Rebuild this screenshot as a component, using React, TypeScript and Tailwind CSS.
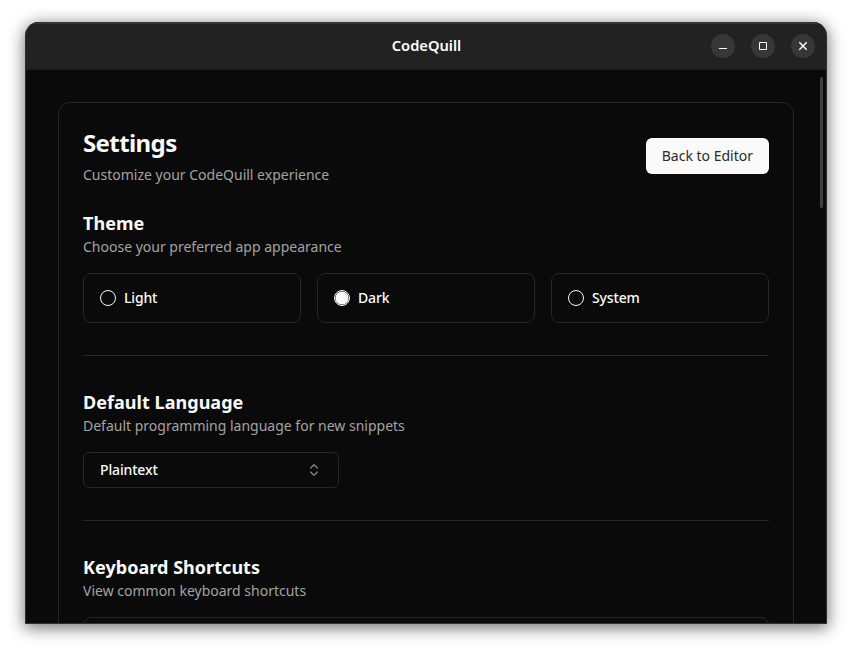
import { ReactNode } from "react";

function WindowButton({ label, children }: { label: string; children: ReactNode }) {
  return (
    <button aria-label={label} className="flex size-6 items-center justify-center rounded-full bg-[#373737]">
      <svg width="24" height="24" viewBox="0 0 24 24" fill="none" stroke="#fff">
        {children}
      </svg>
    </button>
  );
}

function TitleBar() {
  return (
    <header className="grid h-12 shrink-0 grid-cols-[1fr_auto_1fr] items-center border-t-2 border-b border-t-[#343434] border-b-[#1b1b1b] bg-[#222222] pr-[11px] pb-px">
      <span />
      <span className="pb-0.5 pl-3 text-[14.67px] font-semibold leading-5 text-white">CodeQuill</span>
      <div className="flex justify-end gap-4">
        <WindowButton label="Minimize">
          <path d="M8 14.5h8" />
        </WindowButton>
        <WindowButton label="Maximize">
          <path d="M8.5 8.5h7v7h-7z" />
        </WindowButton>
        <WindowButton label="Close">
          <path d="M8.3 8.3l7.4 7.4M15.7 8.3l-7.4 7.4" strokeWidth="1.4" />
        </WindowButton>
      </div>
    </header>
  );
}

function Section({ title, description, children }: { title: string; description: string; children: ReactNode }) {
  return (
    <section>
      <h3 className="text-lg font-bold leading-7 tracking-[0.04px]">{title}</h3>
      <p className="mb-4 text-sm leading-5 text-[#a3a3a3]">{description}</p>
      {children}
    </section>
  );
}

function ThemeOption({ label, checked = false }: { label: string; checked?: boolean }) {
  return (
    <label className="flex h-[50px] items-center gap-2 rounded-lg border border-[#262626] px-4">
      <svg width="16" height="16" viewBox="0 0 16 16" fill="none">
        <circle cx="8" cy="8" r="7.5" stroke="#fafafa" />
        {checked && <circle cx="8" cy="8" r="6.6" fill="#fafafa" />}
      </svg>
      <span className="text-sm font-medium leading-5 tracking-[-0.15px]">{label}</span>
    </label>
  );
}

function Separator() {
  return <div className="my-8 h-px bg-[#262626]" />;
}

export default function App() {
  return (
    <div className="h-[652px] w-[852px] overflow-hidden bg-white pl-[25px] pt-[22px] font-['Noto_Sans',sans-serif]">
      <div className="flex h-[602px] w-[802px] flex-col overflow-hidden rounded-t-[14px] border border-t-0 border-[#303030] bg-[#0a0a0a] text-[#fafafa] shadow-[0_3px_16px_1px_rgba(0,0,0,0.55)]">
        <TitleBar />
        <div className="flex min-h-0 flex-1 overflow-hidden">
          <main className="w-[768px] shrink-0 pl-8 pt-8">
            <div className="h-[700px] rounded-xl border border-[#262626] p-6">
              <div className="mb-6 flex items-center justify-between">
                <div>
                  <h1 className="text-2xl font-bold leading-8 tracking-tight">Settings</h1>
                  <p className="mt-1.5 text-sm leading-5 text-[#a3a3a3]">Customize your CodeQuill experience</p>
                </div>
                <button className="h-9 rounded-md bg-[#fafafa] px-4 text-sm text-[#2b2b2b]">Back to Editor</button>
              </div>
              <Section title="Theme" description="Choose your preferred app appearance">
                <div className="grid grid-cols-3 gap-4">
                  <ThemeOption label="Light" />
                  <ThemeOption label="Dark" checked />
                  <ThemeOption label="System" />
                </div>
              </Section>
              <Separator />
              <Section title="Default Language" description="Default programming language for new snippets">
                <button className="flex h-9 w-64 items-center justify-between rounded-md border border-[#262626] px-4 text-sm font-medium tracking-[-0.15px]">
                  Plaintext
                  <svg width="16" height="16" viewBox="0 0 24 24" fill="none" stroke="#858585" strokeWidth="2" strokeLinecap="round" strokeLinejoin="round">
                    <path d="m7 15 5 5 5-5M7 9l5-5 5 5" />
                  </svg>
                </button>
              </Section>
              <Separator />
              <Section title="Keyboard Shortcuts" description="View common keyboard shortcuts">
                <div className="h-24 rounded-lg border border-[#262626]" />
              </Section>
            </div>
          </main>
          <div className="ml-auto mr-[3px] mt-[7px] h-[131px] w-[3px] rounded-sm bg-[#404040]" />
        </div>
      </div>
    </div>
  );
}
